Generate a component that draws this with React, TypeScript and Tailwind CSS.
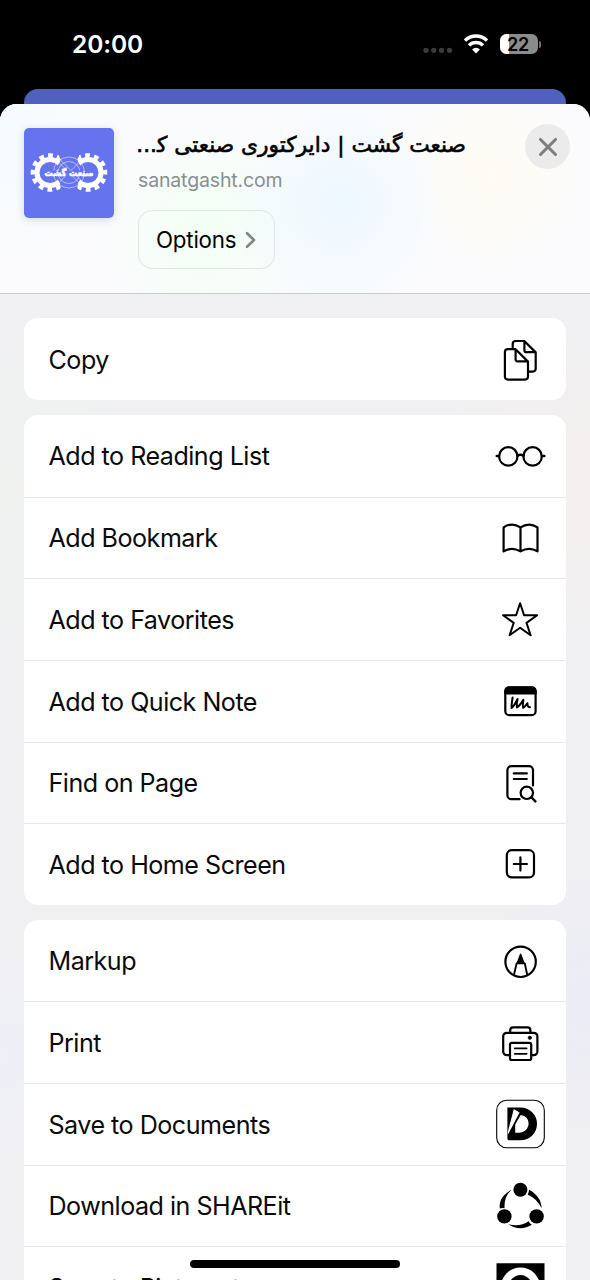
import type { ReactNode } from "react"
import clsx from "clsx"

type Action = {
    label: string
    icon: ReactNode
}

function Icon({ children }: { children: ReactNode }) {
    return (
        <svg
            viewBox="0 0 60 60"
            className="h-[60px] w-[60px] shrink-0"
            fill="none"
            stroke="#000"
            strokeWidth="2.2"
            strokeLinecap="round"
            strokeLinejoin="round"
        >
            {children}
        </svg>
    )
}

const CopyIcon = (
    <Icon>
        <path d="M22.7 19.5V15a3 3 0 0 1 3-3h8.6l11.4 11.4V39.6a3 3 0 0 1-3 3H38.4M34.4 12.2v9a2 2 0 0 0 2 2h9" />
        <path d="M17.9 20.2h7.7L38 32.6v15a3 3 0 0 1-3 3H17.9a3 3 0 0 1-3-3V23.2a3 3 0 0 1 3-3zM25.6 20.5v9.900a2 2 0 0 0 2 2h10" />
    </Icon>
)

const GlassesIcon = (
    <Icon>
        <circle cx="18.3" cy="30.4" r="9.2" />
        <circle cx="42.6" cy="30.4" r="9.2" />
        <path d="M27.3 29.6q3.1-1.6 6.3 0M9 30H6.8M51.9 30h2.4" strokeWidth="2.6" />
    </Icon>
)

const BookIcon = (
    <Icon>
        <path d="M13.6 19.4q8.2-5.7 16.9 0 8.7-5.7 17 0v24q-8.3-5-17 0-8.7-5-16.900 0zM30.5 19.4v24" />
    </Icon>
)

const StarIcon = (
    <Icon>
        <path d="M30.1 13.2l4 12h13l-10.6 7.7 4.1 12.400-10.500-7.500-10.500 7.500 4.100-12.400-10.600-7.700h13z" strokeWidth="2" />
    </Icon>
)

const QuickNoteIcon = (
    <Icon>
        <rect x="15.3" y="16.6" width="30.3" height="27.6" rx="4" />
        <path d="M15.300 22.400V20a4 4 0 0 1 4-3.600h22.300a4 4 0 0 1 4 3.600v2.400z" fill="#000" />
        <path d="M22.600 26.400c-.4 4-1.400 7.400-1 10.600 2.400-2 4.400-5.800 6-9-.8 3-1.200 6-.6 8.400 2.600-1.600 4.600-4.800 6.400-7.600-.4 2.800-1 5.800-.2 8 1.800-.8 3-2.800 4.200-4.600 0 2.200.6 4 2.600 4" strokeWidth="2" />
    </Icon>
)

const FindIcon = (
    <Icon>
        <path d="M29.600 46.200h-8.200a4 4 0 0 1-4-4V17.200a4 4 0 0 1 4-4h17.600a4 4 0 0 1 4 4v15.200M23.800 20.400h13M23.800 26h13" />
        <circle cx="36.800" cy="39.800" r="6.200" />
        <path d="M41.400 44.400l4 4" strokeWidth="2.400" />
    </Icon>
)

const AddHomeIcon = (
    <Icon>
        <rect x="16.800" y="16.200" width="27.200" height="27.200" rx="5" />
        <path d="M30.400 23.400v13.200M23.800 30h13.200" />
    </Icon>
)

const MarkupIcon = (
    <Icon>
        <circle cx="30.600" cy="30.800" r="15.200" />
        <path d="M24 43.800l2.600-11.400h8.200l2.400 11.400" strokeWidth="1.900" />
        <path d="M30.600 23.200l3.400 9.200h-6.900z" fill="#000" strokeWidth="1.400" />
    </Icon>
)

const PrintIcon = (
    <Icon>
        <path d="M20.200 19.600v-2.200a3 3 0 0 1 3-3h14.200a3 3 0 0 1 3 3v2.200" />
        <path d="M20 42.200h-3.200a3.600 3.600 0 0 1-3.600-3.600V23.400a3.600 3.600 0 0 1 3.600-3.600h27a3.600 3.600 0 0 1 3.600 3.600v15.200a3.600 3.600 0 0 1-3.600 3.600H41.400" />
        <rect x="20" y="29.800" width="21.200" height="17.200" rx="1.800" />
        <path d="M24.800 35.400h11.800M24.800 40.800h11.800" strokeWidth="1.800" />
        <circle cx="39.800" cy="24.800" r="1.700" fill="#000" strokeWidth=".6" />
    </Icon>
)

const DocumentsIcon = (
    <Icon>
        <rect x="6.700" y="6.300" width="47.600" height="47.400" rx="10" strokeWidth="1.100" />
        <path
            d="M17.400 13.500h13.200a16.400 16.400 0 0 1 0 32.800H18.800a1.600 1.600 0 0 1-1.400-1.600z"
            fill="#000"
            stroke="none"
        />
        <path d="M23.800 15l5.800 3.400L18 40.500l-.2-2.600z" fill="#fff" stroke="none" />
        <path d="M30.600 21c5.400.8 8.200 4.400 8 8.800-.2 5.200-4.600 9-9.400 9h-4V30.500z" fill="#fff" stroke="none" />
    </Icon>
)

const ShareitIcon = (
    <Icon>
        <g fill="#000" stroke="none">
            <circle cx="30.400" cy="13.700" r="7" />
            <circle cx="14.400" cy="40.400" r="7.200" />
            <circle cx="46.600" cy="40.400" r="7.200" />
            <path d="M21.600 13.800C13 18 8.800 24.600 9.800 32.400q2.400-.6 4.800-.2c-.6-7.600 1.800-14 7-18.400z" />
            <path d="M39 13.800c7.600 4 12.600 10.400 12.600 18.400-3.200-6-7.600-10.800-14-13.600q1.400-2 1.400-4.800z" />
            <path d="M18.400 48.200c7.600 2 14.600 1 20.200-3q1 2.200 3.200 3.600c-7.400 4.600-16.200 4.600-23.400-.6z" />
        </g>
    </Icon>
)

const PinterestIcon = (
    <Icon>
        <g stroke="none">
            <path d="M6.500 5.300H54.500V53H6.500z" fill="#000" />
            <circle cx="30.500" cy="29" r="19.600" fill="#fff" />
            <path d="M18.500 30a12 13 0 0 1 24 0h-5a7 8 0 0 0-14 0z" fill="#000" />
        </g>
    </Icon>
)

const groups: Action[][] = [
    [{ label: "Copy", icon: CopyIcon }],
    [
        { label: "Add to Reading List", icon: GlassesIcon },
        { label: "Add Bookmark", icon: BookIcon },
        { label: "Add to Favorites", icon: StarIcon },
        { label: "Add to Quick Note", icon: QuickNoteIcon },
        { label: "Find on Page", icon: FindIcon },
        { label: "Add to Home Screen", icon: AddHomeIcon },
    ],
    [
        { label: "Markup", icon: MarkupIcon },
        { label: "Print", icon: PrintIcon },
        { label: "Save to Documents", icon: DocumentsIcon },
        { label: "Download in SHAREit", icon: ShareitIcon },
        { label: "Save to Pinterest", icon: PinterestIcon },
    ],
]

function StatusBar() {
    return (
        <div className="flex h-[89px] items-start justify-between pl-[72px] pr-[49px] pt-[28px] text-white">
            <span className="text-[24.5px] font-semibold leading-8 tracking-[-0.1px]">20:00</span>
            <div className="flex h-8 items-center">
                <svg viewBox="0 0 30 32" className="h-8 w-[30px]" fill="#3c3c3c">
                    <circle cx="3" cy="22.300" r="2.600" />
                    <circle cx="10.700" cy="22.300" r="2.600" />
                    <circle cx="18.500" cy="22.300" r="2.600" />
                    <circle cx="26.500" cy="22.300" r="2.600" />
                </svg>
                <svg viewBox="0 0 26 32" className="ml-[10px] h-8 w-[26px]" fill="none" stroke="#fff" strokeWidth="3.400">
                    <path d="M2 12.600a15.600 15.600 0 0 1 22 0" />
                    <path d="M6 17.400a10 10 0 0 1 14 0" />
                    <path d="M13 25.400l-3.900-4a5.600 5.600 0 0 1 7.800 0z" fill="#fff" stroke="none" />
                </svg>
                <div className="relative ml-[11px] h-[20.5px] w-[38px] overflow-hidden rounded-[6.5px] bg-[#8b8b8b]">
                    <div className="h-full w-[8.5px] bg-white" />
                    <span className="absolute inset-0 pr-0.5 text-center text-[18px] font-semibold leading-[21px] tracking-[-0.3px] text-black">22</span>
                </div>
                <div className="ml-px h-[7px] w-[2px] rounded-r-full bg-[#6f6f6f]" />
            </div>
        </div>
    )
}

function SiteLogo() {
    return (
        <svg viewBox="0 0 90 90" className="h-[90px] w-[90px] rounded-[5px] bg-[#6573ee] shadow-[0_2px_8px_rgba(80,90,160,0.2)]">
            <defs>
                <clipPath id="gearLeft">
                    <path d="M0 20h35v8l2 4-3 5v15l3 5-2 13H0z" />
                </clipPath>
            </defs>
            <g fill="none" stroke="#fff" strokeWidth=".5">
                <circle cx="45" cy="44.500" r="15.500" />
                <circle cx="45" cy="44.500" r="11" />
                <path d="M34 33.500l22 22M36 31.500l22 22M56 33.500l-22 22" />
            </g>
            {["", "translate(90 0) scale(-1 1)"].map((transform) => (
                <g key={transform} transform={transform}>
                    <g clipPath="url(#gearLeft)" fill="none" stroke="#fff">
                        <circle cx="26" cy="44.500" r="13" strokeWidth="5" />
                        <circle cx="26" cy="44.500" r="17" strokeWidth="4.600" strokeDasharray="4.800 4.100" strokeDashoffset="2.400" />
                    </g>
                </g>
            ))}
            <path d="M20 42.500h50v5H20z" fill="#6573ee" />
            <text
                x="45"
                y="47.500"
                textAnchor="middle"
                direction="rtl"
                textLength="49"
                lengthAdjust="spacingAndGlyphs"
                fill="#fff"
                stroke="#fff"
                strokeWidth=".6"
                className="font-['DejaVu_Sans'] text-[9px] font-bold"
            >
                صنعت گشت
            </text>
        </svg>
    )
}

function SheetHeader() {
    return (
        <div className="flex h-[190px] shrink-0 items-start border-b border-[#cbcbd0] bg-[#fbfbfd] bg-[radial-gradient(circle_at_340px_100px,#edf8ff_0,transparent_110px),radial-gradient(circle_at_490px_70px,#fefcf3_0,transparent_100px),radial-gradient(circle_at_205px_125px,#f2fff4_0,transparent_110px),radial-gradient(circle_at_10px_30px,#f6fbfd_0,transparent_130px)] pl-6 pr-5">
            <div className="mt-[23.5px] shrink-0">
                <SiteLogo />
            </div>
            <div className="ml-[24px] mt-[23px] flex flex-1 flex-col items-start">
                <h1
                    dir="rtl"
                    className="h-[36px] w-[328px] whitespace-nowrap font-['DejaVu_Sans',sans-serif] text-[21.7px] leading-[36px] text-black [-webkit-text-stroke:0.6px_#000]"
                >
                    {"صنعت گشت | دایرکتوری صنعتی ک\u200d"}
                    <span className="tracking-[-1px]">...</span>
                </h1>
                <p className="mt-[3px] text-[19.5px] leading-[28px] tracking-[-0.15px] text-[#8a8f92]">sanatgasht.com</p>
                <button className="mt-[16px] flex h-[59px] w-[137px] items-center rounded-[14px] border-[1.5px] border-[#e0e5e3] pl-[17px] pt-px text-[22.3px] tracking-[-0.2px] text-black">
                    Options
                    <svg viewBox="0 0 12 20" className="ml-[9px] h-5 w-3" fill="none" stroke="#818583" strokeWidth="2.600" strokeLinecap="round" strokeLinejoin="round">
                        <path d="M2 3.200l7 6.800-7 6.800" />
                    </svg>
                </button>
            </div>
            <button className="mt-[20px] flex h-[45px] w-[45px] items-center justify-center rounded-full bg-[#ebebec]">
                <svg viewBox="0 0 20 20" className="h-5 w-5" stroke="#7f7f82" strokeWidth="3.100" strokeLinecap="round">
                    <path d="M2.500 2.500l15 15M17.500 2.500l-15 15" />
                </svg>
            </button>
        </div>
    )
}

function ActionGroup({ actions }: { actions: Action[] }) {
    return (
        <div className="shrink-0 overflow-hidden rounded-[14px] bg-white">
            {actions.map((action, i) => (
                <div
                    key={action.label}
                    className={clsx(
                        "flex h-[81.65px] items-center justify-between pl-[24.5px] pr-[16px]",
                        i > 0 && "border-t border-[#e9e9eb]"
                    )}
                >
                    <span className="whitespace-nowrap pt-[2.5px] text-[25.1px] tracking-[-0.5px] text-[#0a0a0a]">{action.label}</span>
                    {action.icon}
                </div>
            ))}
        </div>
    )
}

export default function App() {
    return (
        <div className="relative flex h-[1280px] w-[590px] flex-col overflow-hidden bg-black font-['Inter',sans-serif]">
            <StatusBar />
            <div className="mx-6 h-[32px] shrink-0 rounded-t-[14px] bg-[#5060bd]" />
            {/* Share sheet */}
            <div className="-mt-[17px] flex min-h-0 flex-1 flex-col overflow-hidden rounded-t-[17px] bg-[#f0f0f2]">
                <SheetHeader />
                <div className="flex min-h-0 flex-1 flex-col gap-[15px] overflow-hidden bg-[#f0f0f2] bg-[radial-gradient(circle_at_590px_190px,#f4efee_0,transparent_170px),radial-gradient(circle_at_590px_710px,#ebecf6_0,transparent_140px),radial-gradient(circle_at_0px_760px,#eeeff7_0,transparent_120px),radial-gradient(circle_at_0px_200px,#eff1ef_0,transparent_180px)] px-6 pt-[24.3px]">
                    {groups.map((actions) => (
                        <ActionGroup key={actions[0].label} actions={actions} />
                    ))}
                </div>
            </div>
            <div className="absolute bottom-[12px] left-[190px] h-[8px] w-[210px] rounded-full bg-black" />
        </div>
    )
}
